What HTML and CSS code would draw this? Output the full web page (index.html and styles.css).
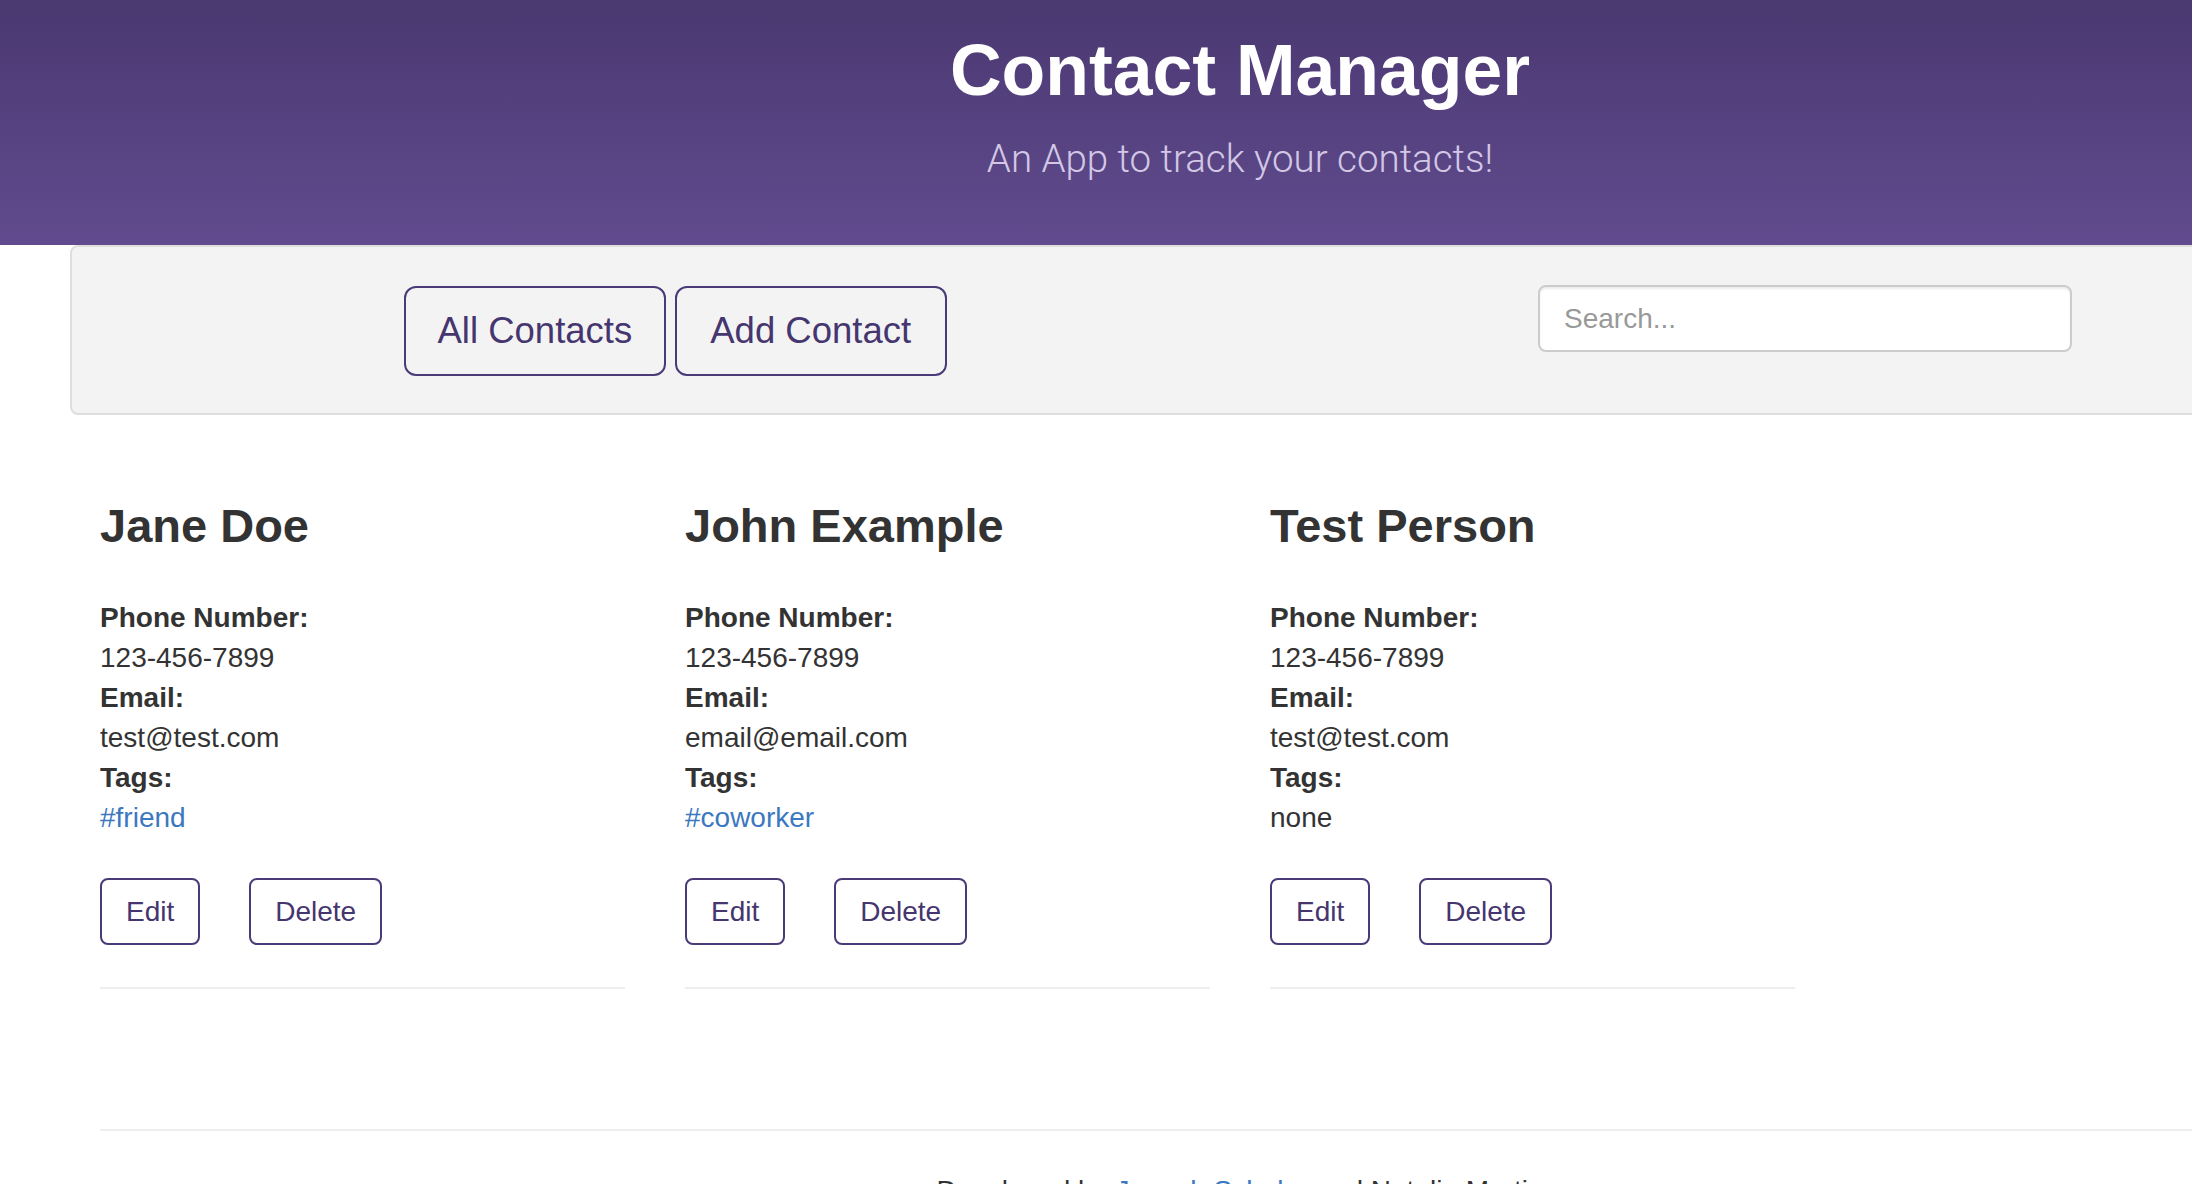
FILE: index.html
```html
<!DOCTYPE html>
<html lang="en">
<head>
<meta charset="utf-8">
<title>Contact Manager</title>
<link rel="stylesheet" href="styles.css">
</head>
<body>
  <header class="masthead">
    <div class="container">
      <h1 class="title">Contact Manager</h1>
      <p class="lead">An App to track your contacts!</p>
    </div>
  </header>

  <div class="container">
    <nav class="navbar">
      <div class="nav-buttons">
        <button class="btn-lg">All Contacts</button>
        <button class="btn-lg">Add Contact</button>
      </div>
      <input class="search" type="text" placeholder="Search...">
    </nav>

    <div class="row">
      <div class="col">
        <h3 class="name">Jane Doe</h3>
        <div class="field"><strong>Phone Number:</strong></div>
        <div class="field">123-456-7899</div>
        <div class="field"><strong>Email:</strong></div>
        <div class="field">test@test.com</div>
        <div class="field"><strong>Tags:</strong></div>
        <div class="field"><a class="tag" href="#">#friend</a></div>
        <div class="actions">
          <button class="btn">Edit</button>
          <button class="btn">Delete</button>
        </div>
        <hr class="divider">
      </div>
      <div class="col">
        <h3 class="name">John Example</h3>
        <div class="field"><strong>Phone Number:</strong></div>
        <div class="field">123-456-7899</div>
        <div class="field"><strong>Email:</strong></div>
        <div class="field">email@email.com</div>
        <div class="field"><strong>Tags:</strong></div>
        <div class="field"><a class="tag" href="#">#coworker</a></div>
        <div class="actions">
          <button class="btn">Edit</button>
          <button class="btn">Delete</button>
        </div>
        <hr class="divider">
      </div>
      <div class="col">
        <h3 class="name">Test Person</h3>
        <div class="field"><strong>Phone Number:</strong></div>
        <div class="field">123-456-7899</div>
        <div class="field"><strong>Email:</strong></div>
        <div class="field">test@test.com</div>
        <div class="field"><strong>Tags:</strong></div>
        <div class="field">none</div>
        <div class="actions">
          <button class="btn">Edit</button>
          <button class="btn">Delete</button>
        </div>
        <hr class="divider">
      </div>
    </div>

    <footer class="footer">
      <hr class="footer-rule">
      <p class="credits">Developed by <a href="#">Joseph Schuler</a> and Natalie Martin</p>
    </footer>
  </div>
</body>
</html>
```

FILE: styles.css
```css
html, body {
  margin: 0;
  padding: 0;
  overflow-x: hidden;
  background: #ffffff;
}

body {
  font-family: "Liberation Sans", Arial, Helvetica, sans-serif;
  font-size: 28px;
  line-height: 40px;
  color: #333333;
}

.container {
  width: 2340px;
  margin-left: 70px;
  box-sizing: border-box;
}

.masthead {
  height: 245px;
  background: linear-gradient(to bottom, #4a3871 0%, #614b8e 100%);
  text-align: center;
  box-sizing: border-box;
  padding-top: 31px;
}

.title {
  margin: 0;
  font-size: 71.5px;
  line-height: 79px;
  font-weight: 700;
  color: #ffffff;
}

.lead {
  margin: 22px 0 0;
  font-family: Roboto, "Liberation Sans", sans-serif;
  font-weight: 300;
  font-size: 38.5px;
  line-height: 53px;
  color: #d2c8e6;
}

.navbar {
  height: 170px;
  box-sizing: border-box;
  background: #f3f3f3;
  border: 2px solid #dedede;
  border-radius: 8px;
  display: flex;
  align-items: flex-start;
  padding: 39px 0 0 332px;
}

.nav-buttons {
  display: flex;
  gap: 9px;
}

.btn-lg {
  height: 90px;
  box-sizing: border-box;
  padding: 0 31.5px;
  border: 2px solid #4a3a78;
  border-radius: 12px;
  background: transparent;
  color: #45366f;
  font-family: "Liberation Sans", Arial, sans-serif;
  font-size: 36.5px;
  line-height: 46px;
  cursor: pointer;
}

.btn-lg + .btn-lg {
  padding: 0 33.5px;
}

.search {
  margin-left: auto;
  margin-right: 336px;
  margin-top: -1px;
  width: 534px;
  height: 67px;
  box-sizing: border-box;
  padding: 0 24px;
  border: 2px solid #cccccc;
  border-radius: 8px;
  background: #ffffff;
  box-shadow: inset 0 2px 2px rgba(0, 0, 0, 0.075);
  font-family: "Liberation Sans", Arial, sans-serif;
  font-size: 28px;
  color: #555555;
  outline: none;
}

.search::placeholder {
  color: #999999;
}

.row {
  display: flex;
}

.col {
  width: 585px;
  box-sizing: border-box;
  padding: 0 30px;
}

.name {
  margin: 84px 0 46px;
  font-size: 47px;
  line-height: 53px;
  font-weight: 700;
  color: #333333;
}

.field strong {
  font-weight: 700;
}

.tag {
  color: #3b78c0;
  text-decoration: none;
}

.actions {
  display: flex;
  gap: 49px;
  margin-top: 40px;
}

.btn {
  height: 67px;
  box-sizing: border-box;
  padding: 0 24px;
  border: 2px solid #4a3a78;
  border-radius: 8px;
  background: #ffffff;
  color: #45366f;
  font-family: "Liberation Sans", Arial, sans-serif;
  font-size: 28px;
  line-height: 40px;
  cursor: pointer;
}

.divider {
  margin: 42px 0 0;
  border: 0;
  border-top: 2px solid #eeeeee;
  height: 0;
}

.footer {
  padding: 0 30px;
}

.footer-rule {
  margin: 140px 0 40px;
  border: 0;
  border-top: 2px solid #eeeeee;
  height: 0;
}

.credits {
  margin: 0;
  text-align: center;
}

.credits a {
  color: #3b78c0;
  text-decoration: none;
}
```
